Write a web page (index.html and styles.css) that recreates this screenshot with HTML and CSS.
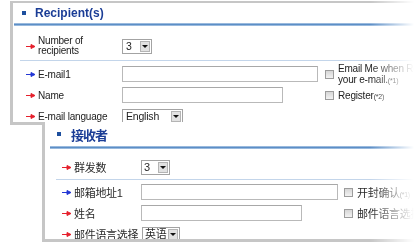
FILE: index.html
```html
<!DOCTYPE html>
<html>
<head>
    <meta charset="utf-8">
    <title>Recipient(s)</title>
    <link rel="stylesheet" href="styles.css">
</head>
<body>
<div class="page">

    <!-- English form -->
    <section class="panel panel-en">
        <div class="panel-head"><span class="dot"></span><h2>Recipient(s)</h2></div>
        <div class="head-line"></div>

        <div class="grid count-row">
            <div class="label">
                <svg class="arrow red" viewBox="0 0 9 5"><path d="M0 2.5H6"/><path class="tip" d="M5 0.5L9 2.5L5 4.5Z"/></svg>
                <span class="two-line">Number of<br>recipients</span>
            </div>
            <div class="select sel-num"><span class="val">3</span><span class="btn"><i></i></span></div>
        </div>
        <div class="sep"></div>

        <div class="grid fields">
            <div class="label">
                <svg class="arrow blue" viewBox="0 0 9 5"><path d="M0 2.5H6"/><path class="tip" d="M5 0.5L9 2.5L5 4.5Z"/></svg>
                <span>E-mail1</span>
            </div>
            <div><input type="text" class="input-long"></div>
            <div class="check"><span class="box"></span><span class="two-line">Email Me when Recipient opens<br>your e-mail.<small>(*1)</small></span></div>

            <div class="label">
                <svg class="arrow red" viewBox="0 0 9 5"><path d="M0 2.5H6"/><path class="tip" d="M5 0.5L9 2.5L5 4.5Z"/></svg>
                <span>Name</span>
            </div>
            <div><input type="text" class="input-short"></div>
            <div class="check"><span class="box"></span><span>Register<small>(*2)</small></span></div>

            <div class="label">
                <svg class="arrow red" viewBox="0 0 9 5"><path d="M0 2.5H6"/><path class="tip" d="M5 0.5L9 2.5L5 4.5Z"/></svg>
                <span>E-mail language</span>
            </div>
            <div class="select sel-lang"><span class="val">English</span><span class="btn"><i></i></span></div>
            <div></div>
        </div>
    </section>

    <!-- Chinese form -->
    <section class="panel panel-cn">
        <div class="panel-head"><span class="dot"></span><h2>接收者</h2></div>
        <div class="head-line"></div>

        <div class="grid count-row">
            <div class="label">
                <svg class="arrow red" viewBox="0 0 9 5"><path d="M0 2.5H6"/><path class="tip" d="M5 0.5L9 2.5L5 4.5Z"/></svg>
                <span>群发数</span>
            </div>
            <div class="select sel-num"><span class="val">3</span><span class="btn"><i></i></span></div>
        </div>
        <div class="sep"></div>

        <div class="grid fields">
            <div class="label">
                <svg class="arrow blue" viewBox="0 0 9 5"><path d="M0 2.5H6"/><path class="tip" d="M5 0.5L9 2.5L5 4.5Z"/></svg>
                <span>邮箱地址1</span>
            </div>
            <div><input type="text" class="input-long"></div>
            <div class="check"><span class="box"></span><span>开封确认<small>(*1)</small></span></div>

            <div class="label">
                <svg class="arrow red" viewBox="0 0 9 5"><path d="M0 2.5H6"/><path class="tip" d="M5 0.5L9 2.5L5 4.5Z"/></svg>
                <span>姓名</span>
            </div>
            <div><input type="text" class="input-short"></div>
            <div class="check"><span class="box"></span><span>邮件语言选择<small>(*2)</small></span></div>

            <div class="label">
                <svg class="arrow red" viewBox="0 0 9 5"><path d="M0 2.5H6"/><path class="tip" d="M5 0.5L9 2.5L5 4.5Z"/></svg>
                <span>邮件语言选择</span>
            </div>
            <div class="select sel-lang"><span class="val">英语</span><span class="btn"><i></i></span></div>
            <div></div>
        </div>
    </section>

</div>
</body>
</html>
```

FILE: styles.css
```css
body {
    margin: 0;
    background-color: #fff;
    font-family: "Liberation Sans", Arial, sans-serif;
    color: #222;
}
.page {
    width: 417px;
    height: 248px;
    overflow: hidden;
    padding-top: 1px;
    box-sizing: border-box;
    /* right side of the screenshot fades out */
    -webkit-mask-image: linear-gradient(to right, #000 370px, rgba(0, 0, 0, 0) 414px);
    mask-image: linear-gradient(to right, #000 370px, rgba(0, 0, 0, 0) 414px);
}
.panel {
    background-color: #fff;
    border-left: 3px solid #c6c6c6;
    border-bottom: 3px solid #c6c6c6;
    overflow: hidden;
}
.panel-en {
    margin-left: 10px;
    border-top: 2px solid #c6c6c6;
    height: 119px;
    font-size: 10px;
    letter-spacing: -0.2px;
    --c1: 96px;
    --pad: 13px;
    --head-h: 20px;
    --head-pad: 9px;
    --head-gap: 9px;
    --line-left: 1px;
    --sep-left: 7px;
    --count-h: 20px;
}
.panel-cn {
    position: relative; /* sits over the bottom of the English panel */
    margin: -3px 0 0 42px;
    height: 117px;
    font-family: "Liberation Sans", "Noto Sans CJK SC", sans-serif;
    font-size: 11px;
    letter-spacing: -0.3px;
    color: #2a2a2a;
    --c1: 79px;
    --pad: 17px;
    --head-h: 24px;
    --head-pad: 12px;
    --head-gap: 10px;
    --line-left: 5px;
    --sep-left: 11px;
    --count-h: 16px;
}
.panel-head {
    height: var(--head-h);
    display: flex;
    align-items: center;
    gap: var(--head-gap);
    padding-left: var(--head-pad);
}
.dot {
    width: 4px;
    height: 4px;
    background-color: #1d4f9e;
}
.panel-head h2 {
    margin: 0;
    font-size: 12px;
    font-weight: bold;
    letter-spacing: 0;
    color: #1b3d96;
}
.panel-cn .panel-head h2 {
    font-family: "Noto Sans CJK SC", sans-serif;
    font-size: 13px;
    letter-spacing: -1px;
}
.head-line {
    height: 3px;
    margin-left: var(--line-left);
    background: linear-gradient(#b7cfe9, #5c8ec6 50%, #b7cfe9);
}
.sep {
    height: 1px;
    margin: 4px 0 0 var(--sep-left);
    background-color: #c3d5ea;
}
.grid {
    display: grid;
    grid-template-columns: var(--c1) 203px 1fr;
    align-items: center;
    padding-left: var(--pad);
    white-space: nowrap;
}
.count-row {
    margin-top: 10px;
    height: var(--count-h);
}
.fields {
    margin-top: 5px;
    grid-auto-rows: 16px;
    row-gap: 5px;
}
.panel-cn .fields {
    margin-top: 4px;
}
.label {
    display: flex;
    align-items: center;
    gap: 3px;
}
.two-line {
    line-height: 10px;
}
.check .two-line {
    line-height: 11px;
}
.arrow {
    width: 9px;
    height: 5px;
    flex: none;
}
.arrow path {
    stroke-width: 1;
    fill: none;
}
.arrow .tip {
    stroke: none;
}
.arrow.red path { stroke: #e5202c; }
.arrow.red .tip { fill: #e5202c; }
.arrow.blue path { stroke: #2236d4; }
.arrow.blue .tip { fill: #2236d4; }
input[type="text"] {
    display: block;
    box-sizing: border-box;
    height: 16px;
    margin: 0;
    padding: 0;
    border: 1px solid #b9b9b9;
    border-top-color: #a8a8a8;
    background-color: #fff;
}
.input-long { width: 196px; }
.input-short { width: 161px; }
.panel-cn .input-long { width: 197px; }
.select {
    display: flex;
    box-sizing: border-box;
    height: 15px;
    border: 1px solid #a3a3a3;
    background-color: #fff;
    font-size: 10.5px;
}
.select .val {
    flex: 1;
    padding-left: 3px;
    line-height: 13px;
}
.select .btn {
    width: 10px;
    margin: 1px;
    box-sizing: border-box;
    border: 1px solid #b4b4b4;
    background-color: #e2e2e2;
    display: flex;
    align-items: center;
    justify-content: center;
}
.select .btn i {
    border-left: 3px solid transparent;
    border-right: 3px solid transparent;
    border-top: 3px solid #111;
}
.panel-en .sel-num { width: 30px; }
.panel-en .sel-lang { width: 61px; }
.panel-cn .sel-num { width: 29px; }
.panel-cn .sel-lang { width: 38px; margin-left: 1px; }
.panel-cn .select .val { font-size: 11px; padding-left: 2px; }
.check {
    display: flex;
    align-items: center;
    gap: 4px;
}
.box {
    width: 9px;
    height: 9px;
    flex: none;
    box-sizing: border-box;
    border: 1px solid #9c9c9c;
    background: linear-gradient(#d6d6d6, #f2f2f2);
}
.check small {
    font-size: 7px;
}
```
